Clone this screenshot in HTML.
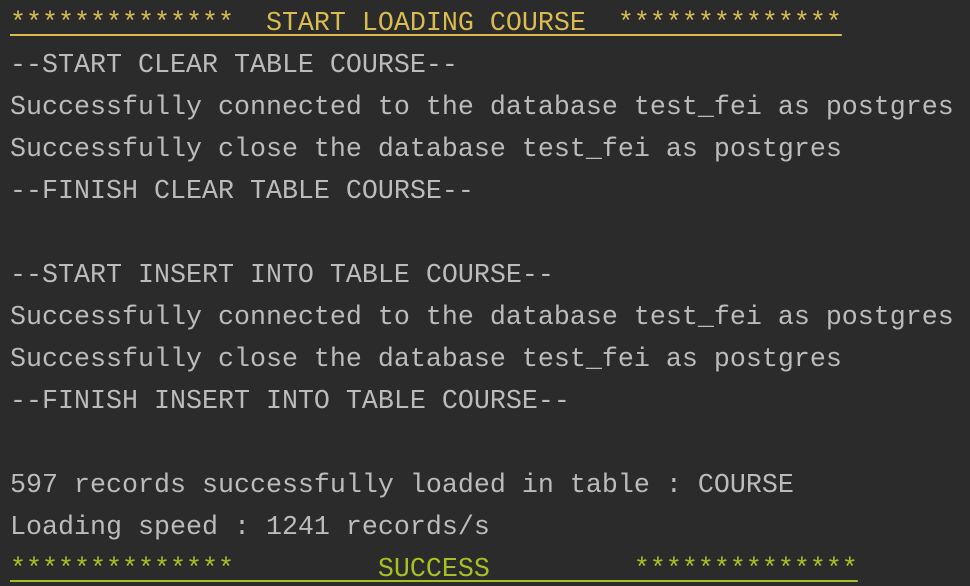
<!DOCTYPE html>
<html><head><meta charset="utf-8"><style>
html,body{margin:0;padding:0;background:#2b2b2b;width:970px;height:586px;overflow:hidden}
pre{margin:0;padding:3px 0 0 10px;font-family:"Liberation Mono",monospace;font-size:26.67px;line-height:42px;color:#bbbbbb;white-space:pre}
.y{color:#d9bb4f;text-decoration:underline;text-decoration-thickness:2px;text-underline-offset:4px}
.g{color:#a5c025;text-decoration:underline;text-decoration-thickness:2px;text-underline-offset:4px}
</style></head><body><pre><span class="y">**************  START LOADING COURSE  **************</span>
--START CLEAR TABLE COURSE--
Successfully connected to the database test_fei as postgres
Successfully close the database test_fei as postgres
--FINISH CLEAR TABLE COURSE--

--START INSERT INTO TABLE COURSE--
Successfully connected to the database test_fei as postgres
Successfully close the database test_fei as postgres
--FINISH INSERT INTO TABLE COURSE--

597 records successfully loaded in table : COURSE
Loading speed : 1241 records/s
<span class="g">**************         SUCCESS         **************</span></pre></body></html>
